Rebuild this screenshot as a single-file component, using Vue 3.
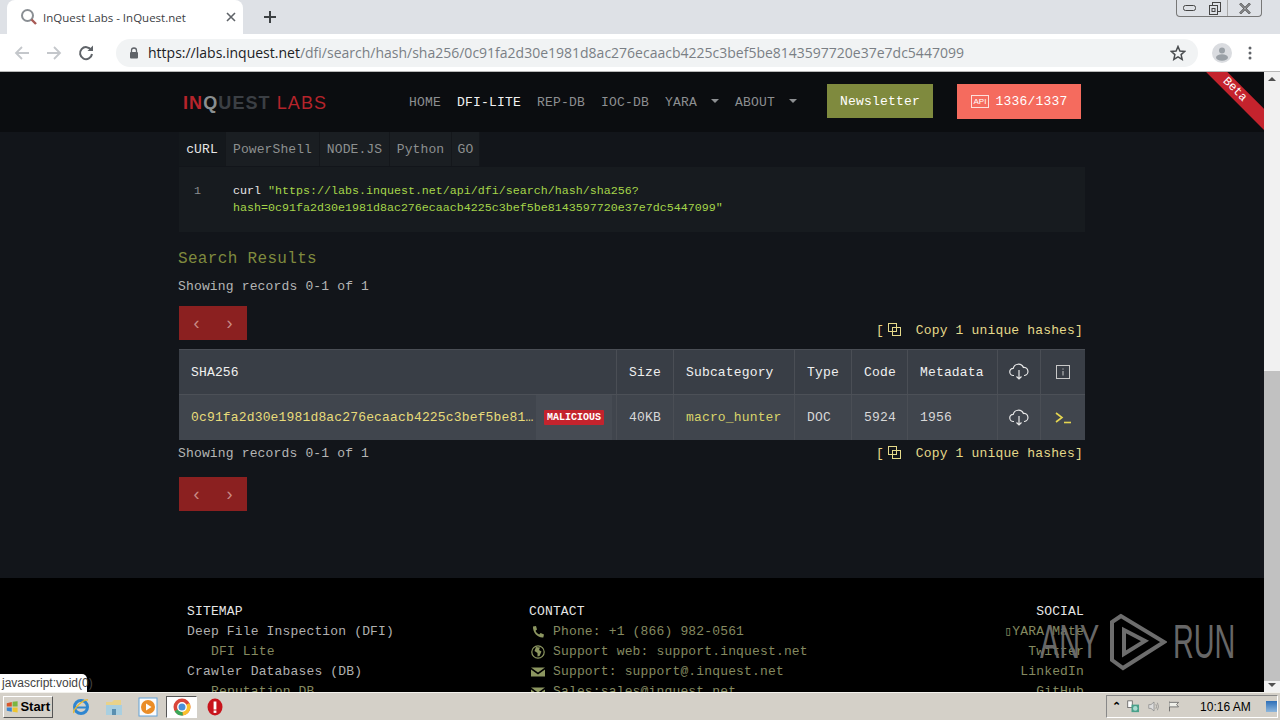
<script setup>
const navItems = [
  { label: 'HOME' },
  { label: 'DFI-LITE', active: true },
  { label: 'REP-DB' },
  { label: 'IOC-DB' },
  { label: 'YARA', caret: true },
  { label: 'ABOUT', caret: true }
]
const tabs = [
  { label: 'cURL', w: 47, active: true },
  { label: 'PowerShell', w: 94 },
  { label: 'NODE.JS', w: 70 },
  { label: 'Python', w: 62 },
  { label: 'GO', w: 28 }
]
const sitemap = [
  { t: 'SITEMAP', head: true },
  { t: 'Deep File Inspection (DFI)', lvl: 1 },
  { t: 'DFI Lite', lvl: 2 },
  { t: 'Crawler Databases (DB)', lvl: 1 },
  { t: 'Reputation DB', lvl: 2 },
  { t: 'Indicators of Compromise (IOC)', lvl: 2 }
]
const contact = [
  { t: 'Phone: +1 (866) 982-0561', i: 'phone' },
  { t: 'Support web: support.inquest.net', i: 'globe' },
  { t: 'Support: support@.inquest.net', i: 'mail' },
  { t: 'Sales:sales@inquest.net', i: 'mail' },
  { t: 'PGP Key', i: 'key' }
]
const social = ['▯YARA Mate', 'Twitter', 'LinkedIn', 'GitHub', 'PyPi']
</script>

<template>
  <div class="window">
    <header class="chrome">
      <div class="tabstrip">
        <div class="tab">
          <svg class="fav" width="18" height="18" viewBox="0 0 18 18" fill="none">
            <circle cx="7.5" cy="7.5" r="5.5" stroke="#8a8f94" stroke-width="2" />
            <path d="M11.5 11.5 L16 16" stroke="#a85a55" stroke-width="2.4" />
          </svg>
          <span class="tabtitle">InQuest Labs - InQuest.net</span>
          <svg class="tabx" width="10" height="10" viewBox="0 0 10 10"><path d="M1 1 L9 9 M9 1 L1 9" stroke="#5f6368" stroke-width="1.6" /></svg>
        </div>
        <svg class="plus" width="12" height="12" viewBox="0 0 12 12"><path d="M6 0 V12 M0 6 H12" stroke="#3c4043" stroke-width="2" /></svg>
        <div class="winctl">
          <span class="wc"><svg width="13" height="6" viewBox="0 0 13 6"><rect x=".5" y=".5" width="12" height="5" rx="2" fill="none" stroke="#444" /></svg></span>
          <span class="wc"><svg width="12" height="13" viewBox="0 0 12 13" fill="none" stroke="#444"><rect x="3.5" y=".5" width="8" height="9" /><rect x=".5" y="3.5" width="8" height="9" fill="#dee1e6" /><rect x="3" y="6.5" width="3" height="3" /></svg></span>
          <span class="wc wide"><svg width="12" height="11" viewBox="0 0 12 11" fill="none" stroke="#444"><path d="M1 .5 L11 10.5 M11 .5 L1 10.5" stroke-width="2.4" /><path d="M1 .5 L11 10.5 M11 .5 L1 10.5" stroke="#dee1e6" stroke-width=".8" /></svg></span>
        </div>
      </div>
      <div class="toolbar">
        <svg width="16" height="16" viewBox="0 0 16 16" fill="none" stroke="#c4c7cb" stroke-width="1.8"><path d="M15 8 H2 M8 2 L2 8 L8 14" /></svg>
        <svg width="16" height="16" viewBox="0 0 16 16" fill="none" stroke="#c4c7cb" stroke-width="1.8"><path d="M1 8 H14 M8 2 L14 8 L8 14" /></svg>
        <svg width="16" height="16" viewBox="0 0 16 16" fill="none"><path d="M13.2 5 A6 6 0 1 0 14 9" stroke="#5f6368" stroke-width="2" /><path d="M9.5 6 H15 V.5 Z" fill="#5f6368" /></svg>
        <div class="omnibox">
          <svg width="10" height="12" viewBox="0 0 10 12"><path d="M2.5 5 V3.5 a2.5 2.5 0 0 1 5 0 V5" fill="none" stroke="#5f6368" stroke-width="1.3" /><rect x="1" y="5" width="8" height="6.5" rx="1" fill="#5f6368" /></svg>
          <span class="url"><b>https://labs.inquest.net</b>/dfi/search/hash/sha256/0c91fa2d30e1981d8ac276ecaacb4225c3bef5be8143597720e37e7dc5447099</span>
          <svg class="star" width="16" height="16" viewBox="0 0 16 16"><path d="M8 1.5 L9.9 6 L14.8 6.4 L11.1 9.6 L12.2 14.4 L8 11.9 L3.8 14.4 L4.9 9.6 L1.2 6.4 L6.1 6 Z" fill="none" stroke="#4a4d50" stroke-width="1.5" /></svg>
        </div>
        <svg class="avatar" width="20" height="20" viewBox="0 0 20 20"><circle cx="10" cy="10" r="10" fill="#dadce0" /><circle cx="10" cy="7.5" r="3" fill="#9aa0a6" /><ellipse cx="10" cy="14.5" rx="6" ry="3.2" fill="#9aa0a6" /></svg>
        <svg width="4" height="14" viewBox="0 0 4 14" fill="#5f6368"><circle cx="2" cy="2" r="1.5" /><circle cx="2" cy="7" r="1.5" /><circle cx="2" cy="12" r="1.5" /></svg>
      </div>
    </header>

    <div class="viewport">
      <main class="page">
        <nav class="nav">
          <div class="logo"><span class="lr">IN</span><span class="lq">Q</span><span class="lg">UEST</span><span class="lr lb">LABS</span></div>
          <ul class="links">
            <li v-for="n in navItems" :key="n.label" :class="{ on: n.active }">{{ n.label }}<i v-if="n.caret" class="caret"></i></li>
          </ul>
          <a class="newsletter">Newsletter</a>
          <a class="api"><span class="apitag">API</span>1336/1337</a>
          <div class="beta"><span>Beta</span></div>
        </nav>

        <section class="content">
          <div class="tabs">
            <span v-for="t in tabs" :key="t.label" class="ctab" :class="{ on: t.active }" :style="{ width: t.w + 'px' }">{{ t.label }}</span>
          </div>
          <div class="code">
            <span class="ln">1</span>
            <div class="src"><span class="cmd">curl</span>  <span class="str">"https://labs.inquest.net/api/dfi/search/hash/sha256?<br />hash=0c91fa2d30e1981d8ac276ecaacb4225c3bef5be8143597720e37e7dc5447099"</span></div>
          </div>

          <h2 class="title">Search Results</h2>
          <p class="showing">Showing records 0-1 of 1</p>
          <div class="pagerrow">
            <div class="pager"><span>‹</span><span>›</span></div>
            <a class="copy"><span class="br">[</span>
              <svg width="14" height="14" viewBox="0 0 14 14" fill="none" stroke="#e5d98a"><rect x="1.5" y=".5" width="8" height="8" /><rect x="5.5" y="4.5" width="8" height="8" /></svg>
              Copy 1 unique hashes<span class="br">]</span></a>
          </div>

          <div class="table">
            <div class="tr head">
              <div class="td c1">SHA256</div>
              <div class="td c2">Size</div>
              <div class="td c3">Subcategory</div>
              <div class="td c4">Type</div>
              <div class="td c5">Code</div>
              <div class="td c6">Metadata</div>
              <div class="td c7 ic">
                <svg width="20" height="18" viewBox="0 0 20 18" fill="none" stroke="#e8e8e8" stroke-width="1.2"><path d="M5 12.5 H4.5 a3.6 3.6 0 0 1 -.3 -7.2 a5.4 5.4 0 0 1 10.2 -.8 a4 4 0 0 1 1 8 H15" /><path d="M10 7 V16 M7.5 13.5 L10 16 L12.5 13.5" /></svg>
              </div>
              <div class="td c8 ic">
                <svg width="14" height="14" viewBox="0 0 14 14" fill="none" stroke="#c8c8c8"><rect x=".5" y=".5" width="13" height="13" /><path d="M7 3.5 V4.6 M7 6 V10.5" /></svg>
              </div>
            </div>
            <div class="tr row">
              <div class="td c1 hashcell">
                <span class="hash">0c91fa2d30e1981d8ac276ecaacb4225c3bef5be8143597720e37e7dc5447099</span>
                <span class="badgewrap"><span class="badge">MALICIOUS</span></span>
              </div>
              <div class="td c2">40KB</div>
              <div class="td c3 link">macro_hunter</div>
              <div class="td c4">DOC</div>
              <div class="td c5">5924</div>
              <div class="td c6">1956</div>
              <div class="td c7 ic">
                <svg width="20" height="18" viewBox="0 0 20 18" fill="none" stroke="#e8e8e8" stroke-width="1.2"><path d="M5 12.5 H4.5 a3.6 3.6 0 0 1 -.3 -7.2 a5.4 5.4 0 0 1 10.2 -.8 a4 4 0 0 1 1 8 H15" /><path d="M10 7 V16 M7.5 13.5 L10 16 L12.5 13.5" /></svg>
              </div>
              <div class="td c8 ic">
                <svg width="16" height="12" viewBox="0 0 16 12" fill="none" stroke="#e5d550" stroke-width="1.6"><path d="M1 1 L7 5.5 L1 10" /><path d="M9 10.5 H16" /></svg>
              </div>
            </div>
          </div>

          <div class="after">
            <p class="showing tight">Showing records 0-1 of 1</p>
            <a class="copy"><span class="br">[</span>
              <svg width="14" height="14" viewBox="0 0 14 14" fill="none" stroke="#e5d98a"><rect x="1.5" y=".5" width="8" height="8" /><rect x="5.5" y="4.5" width="8" height="8" /></svg>
              Copy 1 unique hashes<span class="br">]</span></a>
          </div>
          <div class="pager second"><span>‹</span><span>›</span></div>
        </section>

        <footer class="footer">
          <div class="fcol">
            <div v-for="s in sitemap" :key="s.t" class="fline" :class="{ head: s.head, l1: s.lvl === 1, l2: s.lvl === 2 }">{{ s.t }}</div>
          </div>
          <div class="fcol mid">
            <div class="fline head">CONTACT</div>
            <div v-for="c in contact" :key="c.t" class="fline l2 cline">
              <svg v-if="c.i === 'phone'" width="14" height="14" viewBox="0 0 14 14"><path d="M2 1.5 L5 1 L6 4.5 L4.5 5.8 C5.2 7.5 6.5 8.8 8.2 9.6 L9.6 8 L13 9.5 L12.3 12.5 C7 13.2 1.5 7.5 2 1.5 Z" fill="#8c9660" /></svg>
              <svg v-else-if="c.i === 'globe'" width="14" height="14" viewBox="0 0 14 14" fill="none"><circle cx="7" cy="7" r="6.2" stroke="#8c9660" stroke-width="1.2" /><path d="M5 2 L9 2.5 L8 5 L10.5 6.5 L8.5 11 L6.5 11.5 L6.5 8 L3.5 6 Z" fill="#8c9660" /></svg>
              <svg v-else-if="c.i === 'mail'" width="14" height="14" viewBox="0 0 14 14"><path d="M0 2.5 H14 L7 7.5 Z M0 4.5 L7 9.5 L14 4.5 V11.5 H0 Z" fill="#8c9660" /></svg>
              <svg v-else width="14" height="14" viewBox="0 0 14 14" fill="none" stroke="#8c9660" stroke-width="1.4"><circle cx="7" cy="4.5" r="3.5" /><path d="M7 8 V14" /></svg>
              <span>{{ c.t }}</span>
            </div>
          </div>
          <div class="fcol right">
            <div class="fline head">SOCIAL</div>
            <div v-for="s in social" :key="s" class="fline l2">{{ s }}</div>
          </div>
        </footer>
      </main>

      <aside class="scrollbar">
        <span class="arrow up"></span>
        <span class="track"><span class="thumb"></span></span>
        <span class="arrow down"></span>
      </aside>
    </div>

    <div class="status">javascript:void(0)</div>

    <div class="watermark">
      <span class="wm wm1">ANY</span>
      <svg width="58" height="62" viewBox="0 0 58 62" fill="none" stroke="#6d6d6d" stroke-width="4"><path d="M12 6 L3 12 V50 L14 58 L55 32 L12 6 Z M15 20 V44 L36 31 Z" /></svg>
      <span class="wm wm2">RUN</span>
    </div>

    <footer class="taskbar">
      <button class="start">
        <svg width="16" height="16" viewBox="0 0 16 16"><path d="M1 3 L7.5 1.5 V7.5 H1 Z" fill="#d8562a" /><path d="M8.5 1.3 L15 .5 V7.5 H8.5 Z" fill="#7ab540" /><path d="M1 8.5 H7.5 V14 L1 13 Z" fill="#3a85d0" /><path d="M8.5 8.5 H15 V15 L8.5 14.2 Z" fill="#eec52e" /></svg>
        Start
      </button>
      <svg class="tb ie" width="20" height="20" viewBox="0 0 20 20" fill="none"><circle cx="10" cy="10" r="6.5" stroke="#2f86d0" stroke-width="3" /><path d="M4 10.5 H16" stroke="#2f86d0" stroke-width="2" /><path d="M3 16 C1 13 12 2 17 3" stroke="#e8b830" stroke-width="1.4" /></svg>
      <svg class="tb ex" width="20" height="18" viewBox="0 0 20 18"><path d="M2 4 H8 L10 2 H17 V16 H2 Z" fill="#e9d28a" /><rect x="2" y="7" width="16" height="10" fill="#a9cfe0" /><rect x="8" y="11" width="4" height="6" fill="#5a8fb0" /></svg>
      <svg class="tb wm" width="20" height="20" viewBox="0 0 20 20"><rect x="1" y="1" width="18" height="18" fill="#fff" stroke="#5f9fd8" /><circle cx="10" cy="10" r="7" fill="#ec8a1f" /><path d="M8 6.5 L13.5 10 L8 13.5 Z" fill="#fff" /></svg>
      <span class="tb-active">
        <svg width="18" height="18" viewBox="0 0 18 18"><circle cx="9" cy="9" r="8.5" fill="#d9463a" /><path d="M9 9 L1.6 13.3 A8.5 8.5 0 0 0 10 17.4 Z" fill="#3aa757" /><path d="M9 9 L16.4 4.9 A8.5 8.5 0 0 1 10 17.4 Z" fill="#fbc02d" /><circle cx="9" cy="9" r="4.2" fill="#4a90d9" stroke="#fff" stroke-width="1.4" /></svg>
      </span>
      <svg class="tb op" width="16" height="18" viewBox="0 0 16 18"><ellipse cx="8" cy="9" rx="7.5" ry="8.5" fill="#c8141c" /><rect x="6.6" y="3.5" width="2.8" height="8" fill="#fff" /><rect x="6.6" y="12.5" width="2.8" height="2.4" fill="#fff" /></svg>
      <div class="tray">
        <span class="chev">⌃</span>
        <svg width="17" height="17" viewBox="0 0 17 17"><rect x="1" y="1" width="6" height="9" fill="#fff" stroke="#555" /><rect x="6" y="6" width="10" height="10" fill="#4aa08a" /><circle cx="11" cy="11" r="3" fill="#a8dcd0" /></svg>
        <svg width="16" height="15" viewBox="0 0 16 15" fill="none" stroke="#8a8a8a"><path d="M1 5 H4 L8 1.5 V13.5 L4 10 H1 Z" fill="#ddd" /><path d="M10.5 4.5 Q12.5 7.5 10.5 10.5 M12.5 2.5 Q15.5 7.5 12.5 12.5" /></svg>
        <svg width="15" height="15" viewBox="0 0 15 15" fill="none" stroke="#555"><path d="M2 1 V14" /><path d="M2 2 H14 L11.5 5 L14 8 H2" fill="#f0f0ea" /></svg>
        <span class="clock">10:16 AM</span>
        <span class="showdesk"></span>
      </div>
    </footer>
  </div>
</template>

<style>
html, body { margin: 0; background: #000; overflow: hidden; }
</style>

<style scoped>
.window { position: relative; width: 1280px; height: 720px; display: flex; flex-direction: column; overflow: hidden; font-family: "Liberation Mono", monospace; }
.chrome { flex: none; height: 72px; background: #fff; border-bottom: 1px solid #b8b8b8; box-sizing: border-box; }
.tabstrip { height: 34px; background: #dee1e6; display: flex; align-items: center; position: relative; padding-left: 7px; }
.tab { width: 196px; height: 34px; background: #fff; border-radius: 8px 8px 0 0; display: flex; align-items: center; padding: 0 7px 0 13px; width: 216px; }
.fav { flex: none; }
.tabtitle { font: 11.5px "Open Sans", sans-serif; color: #3c4043; margin-left: 5px; flex: 1; white-space: nowrap; }
.tabx { flex: none; }
.plus { margin-left: 21px; }
.winctl { position: absolute; right: 18px; top: 0; height: 16px; display: flex; border: 1px solid #777; border-top: 0; border-radius: 0 0 4px 4px; }
.wc { width: 25px; display: flex; align-items: center; justify-content: center; }
.wc.wide { width: 33px; border-left: 1px solid #aaa; }
.toolbar { height: 37px; display: flex; align-items: center; padding: 0 0 0 14px; gap: 16px; }
.omnibox { margin-left: 6px; width: 1082px; height: 28px; background: #f1f3f4; border-radius: 14px; display: flex; align-items: center; padding: 0 12px 0 13px; box-sizing: border-box; position: relative; }
.url { font: 14px "Open Sans", sans-serif; color: #7a7f85; margin-left: 9px; white-space: nowrap; }
.url b { font-weight: 400; color: #202124; }
.star { position: absolute; right: 12px; }
.avatar { margin-left: -2px; }

.viewport { flex: 1; min-height: 0; display: flex; }
.page { flex: 1; min-width: 0; overflow: hidden; background: #12151a; }
.nav { position: relative; height: 60px; background: #0b0d10; display: flex; align-items: center; padding-left: 183px; box-sizing: border-box; overflow: hidden; }
.logo { width: 226px; font: 700 18px "Liberation Sans", sans-serif; letter-spacing: 1.1px; white-space: nowrap; flex: none; padding-top: 3px; }
.lr { color: #b5242b; }
.lq { color: #8a8f90; }
.lg { color: #3b3f44; }
.lb { margin-left: 6px; font-weight: 400; }
.links { list-style: none; margin: 0; padding: 0; display: flex; gap: 16px; font-size: 13px; letter-spacing: .2px; color: #8d8f92; width: 418px; flex: none; padding-top: 1px; }
.links li { display: flex; align-items: center; white-space: nowrap; }
.links li.on { color: #f2f2f2; }
.caret { width: 0; height: 0; border: 4px solid transparent; border-top-color: #8d8f92; border-bottom: 0; margin-left: 14px; margin-top: -3px; }
.newsletter { width: 106px; height: 34px; background: #7f8a3e; color: #fff; font-size: 13px; letter-spacing: .2px; display: flex; align-items: center; justify-content: center; margin-top: -2px; }
.api { width: 124px; height: 35px; margin-left: 24px; background: #f56b5e; color: #fff; font-size: 13px; letter-spacing: .2px; display: flex; align-items: center; justify-content: center; gap: 6px; margin-top: -1px; }
.apitag { font: 8px "Liberation Sans", sans-serif; border: 1px solid #fde0dc; padding: 1px 2px; letter-spacing: 0; }
.beta { position: absolute; right: -29px; top: -1px; width: 100px; height: 15px; background: #c4232d; color: #fff; transform: rotate(45deg) translate(2px, 14px); font-size: 12px; text-align: center; line-height: 15px; }

.content { height: 429px; padding-left: 179px; width: 906px; box-sizing: content-box; position: relative; }
.tabs { display: flex; height: 34px; }
.ctab { height: 34px; display: flex; align-items: center; justify-content: center; box-sizing: border-box; background: #1a1e22; color: #8d9090; font-size: 13px; letter-spacing: .1px; border-right: 1px solid #14171b; }
.ctab.on { background: #14181c; color: #e6e6e6; }
.code { margin-top: 1px; height: 65px; background: #171b1f; display: flex; box-sizing: border-box; padding: 16px 0 0 15px; font-size: 11.67px; line-height: 17px; }
.ln { width: 39px; color: #8a8d90; flex: none; }
.src { white-space: pre; }
.cmd { color: #e6e6e6; }
.str { color: #a6d64a; }
.title { margin: 17px 0 0 -1px; font-size: 16px; letter-spacing: .33px; font-weight: 400; color: #7f8a3e; line-height: 20px; height: 20px; }
.showing { margin: 9px 0 0 -1px; font-size: 13px; letter-spacing: .16px; color: #b5b5b5; line-height: 18px; height: 18px; white-space: nowrap; }
.showing.tight { margin-top: 0; }
.pagerrow { display: flex; justify-content: space-between; align-items: flex-end; margin-top: 10px; height: 34px; }
.pager { width: 68px; height: 34px; background: #8b2020; color: #c98a85; display: flex; align-items: center; justify-content: space-around; padding: 0 1px; box-sizing: border-box; font-size: 18px; font-family: "Liberation Sans", sans-serif; }
.pager.second { margin-top: 9px; }
.copy { color: #e5d98a; font-size: 13px; letter-spacing: .16px; display: flex; align-items: center; gap: 0; margin-right: 2px; white-space: pre; line-height: 18px; }
.copy svg { margin: 0 7px 3px 3px; }
.br { color: #e5d98a; }
.table { margin-top: 9px; width: 906px; }
.tr { display: flex; }
.tr.head { height: 45px; background: #393e46; border-top: 1px solid #4a4e55; box-sizing: border-box; color: #f0f0f0; }
.tr.row { height: 46px; background: #40454d; border-top: 1px solid #4c5057; box-sizing: border-box; color: #d8d8d8; }
.td { font-size: 13px; letter-spacing: .16px; display: flex; align-items: center; padding-left: 12px; box-sizing: border-box; border-right: 1px solid #4a4e55; height: 100%; white-space: nowrap; flex: none; }
.c1 { width: 438px; }
.c2 { width: 57px; }
.c3 { width: 121px; }
.c4 { width: 57px; }
.c5 { width: 56px; }
.c6 { width: 90px; }
.c7 { width: 43px; }
.c8 { width: 44px; border-right: 0; }
.ic { padding-left: 0; justify-content: center; }
.link { color: #d9d46a; }
.hashcell { gap: 0; padding-right: 4px; }
.hash { color: #e8dc7a; flex: 1; min-width: 0; overflow: hidden; text-overflow: ellipsis; }
.badgewrap { flex: none; background: #464b53; height: 100%; display: flex; align-items: center; padding: 0 8px; }
.badge { background: #c4232d; color: #fff; font-size: 10px; font-weight: 700; letter-spacing: 0; padding: 2px 3px; border-radius: 1px; }
.after { display: flex; justify-content: space-between; align-items: center; height: 28px; }

.footer { height: 200px; background: #000; display: flex; box-sizing: border-box; padding: 24px 180px 0 187px; margin-top: 17px; }
.fcol { width: 342px; flex: none; }
.fcol.right { margin-left: auto; width: auto; text-align: right; }
.fline { height: 20px; line-height: 20px; font-size: 13px; letter-spacing: .16px; white-space: nowrap; color: #8c8f70; }
.fline.head { color: #e6e6e6; }
.fline.l1 { color: #b0b0b0; }
.fline.l2 { color: #858a60; }
.fcol:first-child .fline.l2 { padding-left: 24px; }
.cline { display: flex; align-items: center; gap: 8px; color: #858a60; padding-left: 2px; }

.scrollbar { flex: none; width: 16px; background: #f1f1f1; display: flex; flex-direction: column; align-items: center; }
.arrow { flex: none; width: 0; height: 0; border: 4px solid transparent; margin: 5px 0; }
.arrow.up { border-bottom: 4px solid #505050; border-top: 0; }
.arrow.down { border-top: 4px solid #505050; border-bottom: 0; }
.track { flex: 1; width: 100%; position: relative; }
.thumb { position: absolute; left: 0; right: 0; top: 285px; height: 310px; background: #c1c1c1; }

.status { position: absolute; left: 0; bottom: 28px; height: 18px; line-height: 19px; background: #fff; color: #444; font: 12px/19px "Liberation Sans", sans-serif; padding: 0 2px; width: 87px; border-radius: 0 5px 0 0; box-sizing: border-box; white-space: nowrap; }

.watermark { position: absolute; left: 1040px; top: 610px; display: flex; align-items: center; width: 192px; height: 62px; pointer-events: none; }
.watermark svg { position: absolute; left: 69px; top: 0; }
.wm { position: absolute; font: 400 48px/48px "Liberation Sans", sans-serif; color: #6d6d6d; transform-origin: left center; transform: scaleX(.6); opacity: .95; top: 8px; }
.wm1 { left: 0; }
.wm2 { left: 133px; }

.taskbar { flex: none; height: 28px; background: #d4d0c8; border-top: 1px solid #f2f1ec; box-sizing: border-box; display: flex; align-items: center; position: relative; padding-left: 3px; }
.start { width: 50px; height: 22px; background: #d4d0c8; border: 1px solid; border-color: #fff #555 #555 #fff; display: flex; align-items: center; gap: 2px; padding: 0 2px; font: 700 13px "Liberation Sans", sans-serif; color: #000; }
.tb { flex: none; }
.ie { margin-left: 18px; }
.ex { margin-left: 13px; }
.wm.tb { position: static; transform: none; }
.taskbar .wm { margin-left: 14px; }
.tb-active { flex: none; width: 31px; height: 22px; margin-left: 8px; background: #fff; border: 1px solid; border-color: #555 #fff #fff #555; box-sizing: border-box; display: flex; align-items: center; justify-content: center; }
.op { margin-left: 10px; }
.tray { position: absolute; right: 2px; top: 2px; height: 23px; width: 172px; border: 1px solid; border-color: #888 #fff #fff #888; box-sizing: border-box; display: flex; align-items: center; padding-left: 5px; gap: 8px; }
.chev { font: 700 11px "Liberation Sans", sans-serif; color: #000; width: 7px; }
.clock { font: 12px "Liberation Sans", sans-serif; color: #000; margin-left: 13px; white-space: nowrap; }
.showdesk { width: 15px; height: 11px; background: linear-gradient(#2d6fb8, #8fb7dc); margin-left: 7px; }
</style>
